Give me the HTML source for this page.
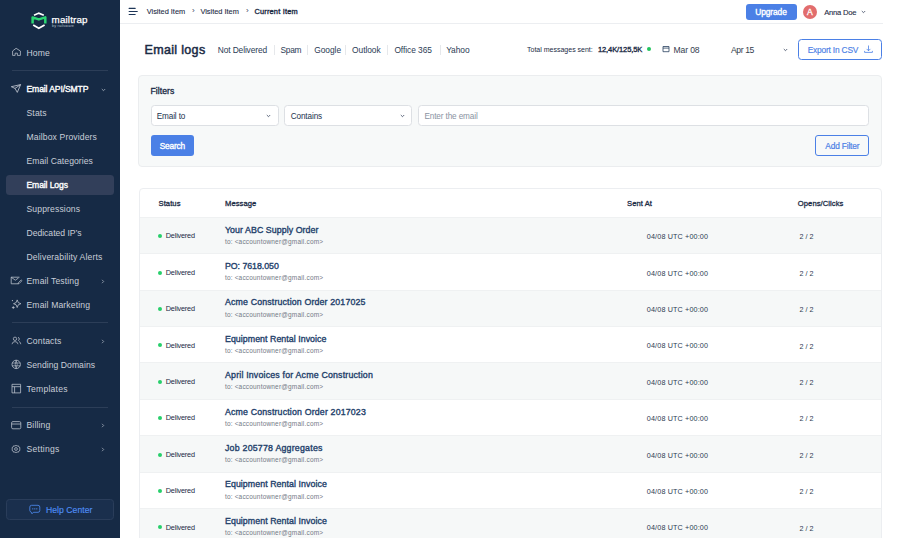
<!DOCTYPE html>
<html><head><meta charset="utf-8">
<style>
*{box-sizing:border-box;margin:0;padding:0}
html,body{width:900px;height:538px;overflow:hidden;background:#fff;font-family:"Liberation Sans",sans-serif;color:#1b2b45}
.sb{position:absolute;left:0;top:0;width:119.5px;height:538px;background:#162a45}
.abs{position:absolute;white-space:nowrap}
.nav{position:absolute;left:26.5px;font-size:8.6px;color:#c9ced8;line-height:10px;letter-spacing:0.13px;margin-top:0.4px;white-space:nowrap}
.nav.b{font-weight:normal;color:#fff;letter-spacing:-0.12px;-webkit-text-stroke:0.35px #fff}
.ico{position:absolute}
.div{position:absolute;left:12px;width:96px;height:1px;background:#2c3e58;margin-top:-0.6px}
.crumb{top:6.9px;font-size:7.4px;line-height:9px;color:#1b2a44;-webkit-text-stroke:0.1px #1b2a44}
.crumb.b{color:#1b2a44;letter-spacing:0.2px;-webkit-text-stroke:0.35px #1b2a44}
.crumbsep{top:6.4px;font-size:8px;line-height:9px;color:#3a4660}
.tab{top:44.5px;font-size:8.4px;letter-spacing:-0.05px;line-height:10px;color:#2b3b55}
.tsep{top:45px;width:1px;height:10px;background:#e6e8eb}
.sel{top:105.2px;height:20.5px;background:#fff;border:1px solid #dde0e4;border-radius:3.5px}
.seltxt{top:112.2px;font-size:8.2px;letter-spacing:-0.12px;line-height:10px;color:#22324d}
.th{position:absolute;top:10.2px;letter-spacing:0.08px;font-size:7.6px;line-height:9px;font-weight:normal;-webkit-text-stroke:0.3px #1b2b45;color:#1b2b45;white-space:nowrap}
.row{position:absolute;left:0;width:100%;height:36.4px;border-top:1px solid #eff1f2}
.row>div{position:absolute;white-space:nowrap}
.dot{left:18.2px;top:16.3px;width:4px;height:4px;border-radius:50%;background:#27cf6b}
.st{left:25.8px;top:13.6px;font-size:7.3px;letter-spacing:-0.2px;line-height:9px;color:#1b2b45}
.subj{left:85px;top:6.8px;font-size:8.8px;line-height:10px;font-weight:normal;-webkit-text-stroke:0.35px #22406a;color:#22406a}
.to{left:84.9px;top:20px;font-size:6.5px;letter-spacing:0.18px;line-height:8px;color:#737a86}
.dt{left:506.8px;top:14.4px;font-size:7.2px;letter-spacing:0.15px;line-height:9px;color:#2d3b52}
.oc{left:659.5px;top:14.5px;font-size:7.2px;line-height:9px;color:#2d3b52}
.main{position:absolute;left:119.5px;top:0;right:0;bottom:0}
</style></head><body>
<div class="sb">
  <!-- logo -->
  <svg class="ico" style="left:28px;top:9px" width="22" height="22" viewBox="28 9 22 22">
    <path d="M34 15.3 L38.8 13.1 L43.8 15.3" fill="none" stroke="#fff" stroke-width="1.7" stroke-linejoin="miter"/>
    <path d="M33.2 25 L38.8 28.2 L44.6 25" fill="none" stroke="#fff" stroke-width="1.8" stroke-linejoin="miter"/>
    <path d="M32.6 23.5 V17.4 L38.8 19.4 L45.3 17.4 V23.5" fill="none" stroke="#2bd672" stroke-width="2.5" stroke-linejoin="round"/>
  </svg>
  <div class="abs" style="left:51.6px;top:13.6px;font-size:9.8px;line-height:11px;color:#fff;letter-spacing:0.15px;-webkit-text-stroke:0.25px #fff">mailtrap</div>
  <div class="abs" style="left:52px;top:24px;font-size:3.7px;line-height:4px;color:#b8c0cc;letter-spacing:0.2px">by railsware</div>

  <svg class="ico" style="left:10px;top:46px" width="12" height="12" viewBox="10 46 12 12"><path d="M12.6 55.4V51L16.1 48.3L20.4 51V55.4H17.4V53.2H15.1V55.4Z" fill="none" stroke="#b8bfca" stroke-width="0.8" stroke-linejoin="round"/></svg>
  <div class="nav" style="top:47.5px">Home</div>
  <div class="div" style="top:71px"></div>

  <svg class="ico" style="left:9px;top:82px" width="14" height="13" viewBox="9 82 14 13"><path d="M11.3 86.7L20.6 84.6L17.3 92.4L15 88.4Z M15 88.4L20.6 84.6" fill="none" stroke="#c9ced8" stroke-width="0.8" stroke-linejoin="round"/></svg>
  <div class="nav b" style="top:83.5px">Email API/SMTP</div>
  <svg class="ico" style="left:101px;top:88px" width="5" height="4" viewBox="0 0 5 4"><path d="M0.8 1L2.5 2.7L4.2 1" fill="none" stroke="#aab2bf" stroke-width="0.8"/></svg>

  <div class="nav" style="top:108px">Stats</div>
  <div class="nav" style="top:132px">Mailbox Providers</div>
  <div class="nav" style="top:156px;letter-spacing:0.06px">Email Categories</div>
  <div class="abs" style="left:6px;top:174.7px;width:107.7px;height:20.4px;border-radius:3.5px;background:#323f5a"></div>
  <div class="nav b" style="top:180px">Email Logs</div>
  <div class="nav" style="top:204px">Suppressions</div>
  <div class="nav" style="top:228px;letter-spacing:-0.02px">Dedicated IP’s</div>
  <div class="nav" style="top:252px;letter-spacing:0.16px">Deliverability Alerts</div>
  <div class="nav" style="top:276px">Email Testing</div>
  <div class="nav" style="top:300px">Email Marketing</div>
  <div class="div" style="top:322.9px"></div>
  <div class="nav" style="top:336px">Contacts</div>
  <div class="nav" style="top:360px;letter-spacing:0.05px">Sending Domains</div>
  <div class="nav" style="top:384px;letter-spacing:0.23px">Templates</div>
  <div class="div" style="top:407.1px"></div>
  <div class="nav" style="top:420px">Billing</div>
  <div class="nav" style="top:444px;letter-spacing:0.25px">Settings</div>

  <!-- email testing -->
  <svg class="ico" style="left:10px;top:275px" width="13" height="11" viewBox="10 275 13 11"><path d="M19.5 277.2H11.2V283.8H18 M11.2 277.2L15.3 280.2L18.5 278" fill="none" stroke="#c3c9d3" stroke-width="0.75"/><path d="M18.3 282.8L21.2 279.9L22 280.7L19.1 283.6L18 283.9Z" fill="none" stroke="#c3c9d3" stroke-width="0.7"/></svg>
  <svg class="ico" style="left:100.8px;top:279px" width="4" height="5" viewBox="0 0 4 5"><path d="M1 0.8L2.7 2.5L1 4.2" fill="none" stroke="#aab2bf" stroke-width="0.75"/></svg>
  <!-- email marketing -->
  <svg class="ico" style="left:10px;top:298px" width="13" height="12" viewBox="10 298 13 12"><path d="M17.2 299.9Q17.5 303.4 20.9 303.7Q17.5 304 17.2 307.5Q16.9 304 13.5 303.7Q16.9 303.4 17.2 299.9Z" fill="none" stroke="#c3c9d3" stroke-width="0.75" stroke-linejoin="round"/><path d="M13.3 306.2V308.9M11.9 307.55H14.7" stroke="#c3c9d3" stroke-width="0.75"/><circle cx="12.4" cy="300.6" r="0.6" fill="#c3c9d3"/></svg>
  <!-- contacts -->
  <svg class="ico" style="left:10px;top:336px" width="13" height="10" viewBox="10 336 13 10"><circle cx="15" cy="338.8" r="1.7" fill="none" stroke="#c3c9d3" stroke-width="0.7"/><path d="M12 344.2Q12.3 341.6 15 341.6Q17.7 341.6 18 344.2 M18 337.3Q19.5 337.7 19.3 339.2Q19.1 340.4 18 340.6 M19 341.5Q20.6 342 20.8 344.2" fill="none" stroke="#c3c9d3" stroke-width="0.7"/></svg>
  <svg class="ico" style="left:100.8px;top:339px" width="4" height="5" viewBox="0 0 4 5"><path d="M1 0.8L2.7 2.5L1 4.2" fill="none" stroke="#aab2bf" stroke-width="0.75"/></svg>
  <!-- sending domains -->
  <svg class="ico" style="left:10px;top:359px" width="13" height="11" viewBox="10 359 13 11"><circle cx="16.2" cy="364.4" r="4.2" fill="none" stroke="#c3c9d3" stroke-width="0.75"/><path d="M12.2 363H20.2M12.2 365.8H20.2 M16.2 360.2Q14.2 364.4 16.2 368.6 M16.2 360.2Q18.2 364.4 16.2 368.6" fill="none" stroke="#c3c9d3" stroke-width="0.6"/></svg>
  <!-- templates -->
  <svg class="ico" style="left:10px;top:383px" width="13" height="11" viewBox="10 383 13 11"><path d="M12 384.3H20.6V392.9H12Z M12 386.7H20.6 M14.6 386.7V392.9" fill="none" stroke="#c3c9d3" stroke-width="0.75"/></svg>
  <!-- billing -->
  <svg class="ico" style="left:10px;top:420px" width="13" height="11" viewBox="10 420 13 11"><rect x="11.6" y="421.6" width="9.2" height="7.2" rx="1.3" fill="none" stroke="#c3c9d3" stroke-width="0.75"/><path d="M11.6 424H20.8" stroke="#c3c9d3" stroke-width="0.75"/></svg>
  <svg class="ico" style="left:100.8px;top:423px" width="4" height="5" viewBox="0 0 4 5"><path d="M1 0.8L2.7 2.5L1 4.2" fill="none" stroke="#aab2bf" stroke-width="0.75"/></svg>
  <!-- settings -->
  <svg class="ico" style="left:10px;top:444px" width="13" height="11" viewBox="10 444 13 11"><circle cx="16" cy="449" r="1.4" fill="none" stroke="#c3c9d3" stroke-width="0.7"/><path d="M16 445.3L17.1 446L18.4 445.8L18.9 447L20 447.7L19.7 449L20 450.3L18.9 451L18.4 452.2L17.1 452L16 452.7L14.9 452L13.6 452.2L13.1 451L12 450.3L12.3 449L12 447.7L13.1 447L13.6 445.8L14.9 446Z" fill="none" stroke="#c3c9d3" stroke-width="0.7" stroke-linejoin="round"/></svg>
  <svg class="ico" style="left:100.8px;top:447px" width="4" height="5" viewBox="0 0 4 5"><path d="M1 0.8L2.7 2.5L1 4.2" fill="none" stroke="#aab2bf" stroke-width="0.75"/></svg>

  <div class="abs" style="left:6px;top:499.2px;width:107.7px;height:21.2px;border-radius:3.5px;border:1px solid #2a3d5a;background:#1a2f4d"></div>
  <div class="abs" style="left:46px;top:505.2px;font-size:8.6px;color:#4f8ef5;line-height:10px;letter-spacing:0.05px;-webkit-text-stroke:0.15px #4f8ef5">Help Center</div>
  <!-- help chat -->
  <svg class="ico" style="left:28px;top:503px" width="14" height="13" viewBox="28 503 14 13"><path d="M31.6 505.3H38Q39.8 505.3 39.8 507.1V510.5Q39.8 512.3 38 512.3H33.3L32 513.8L31.2 512.1Q29.8 511.6 29.8 510.5V507.1Q29.8 505.3 31.6 505.3Z" fill="none" stroke="#4f8ef5" stroke-width="0.8" stroke-linejoin="round"/><path d="M32.8 508.4V509.2M34.8 508.4V509.2M36.8 508.4V509.2" stroke="#4f8ef5" stroke-width="0.7" stroke-linecap="round"/></svg>
</div>

<div class="main">
  <!-- header -->
  <div class="abs" style="left:0;top:0;width:763.5px;height:23.8px;border-bottom:1px solid #eceef1"></div>
  <svg class="ico" style="left:7.5px;top:6px" width="12" height="11" viewBox="127 6 12 11"><path d="M129.1 8.4H135.2M129.1 11.4H137.3M129.1 14.5H135.2" stroke="#1e3658" stroke-width="1.05" stroke-linecap="round"/></svg>
  <div class="abs crumb" style="left:27.2px">Visited Item</div>
  <div class="abs crumbsep" style="left:72.5px">›</div>
  <div class="abs crumb" style="left:80.9px">Visited Item</div>
  <div class="abs crumbsep" style="left:126.5px">›</div>
  <div class="abs crumb b" style="left:134.9px">Current Item</div>

  <div class="abs" style="left:626.3px;top:3.7px;width:51.2px;height:16px;border-radius:3px;background:#4b80e6"></div>
  <div class="abs" style="left:635.8px;top:7.1px;font-size:8.4px;letter-spacing:-0.1px;line-height:10px;color:#fff;-webkit-text-stroke:0.35px #fff">Upgrade</div>
  <div class="abs" style="left:683.3px;top:5px;width:14.2px;height:14.2px;border-radius:50%;background:#e26d6d"></div>
  <div class="abs" style="left:687.4px;top:6.8px;font-size:8.6px;line-height:10px;color:#fff;-webkit-text-stroke:0.3px #fff">A</div>
  <div class="abs" style="left:704.7px;top:7.8px;font-size:7.6px;letter-spacing:-0.2px;line-height:10px;color:#1b2a44;-webkit-text-stroke:0.1px #1b2a44">Anna Doe</div>
  <svg class="ico" style="left:741.5px;top:10px" width="5" height="4" viewBox="0 0 5 4"><path d="M0.8 1L2.5 2.7L4.2 1" fill="none" stroke="#3a4660" stroke-width="0.8"/></svg>

  <!-- title row -->
  <div class="abs" style="left:25px;top:42.9px;font-size:12.5px;line-height:14px;letter-spacing:0.33px;color:#1b2b45;-webkit-text-stroke:0.5px #1b2b45">Email logs</div>
  <div class="abs tab" style="left:98.3px;letter-spacing:-0.12px">Not Delivered</div>
  <div class="abs tsep" style="left:154px"></div>
  <div class="abs tab" style="left:161px;letter-spacing:-0.3px">Spam</div>
  <div class="abs tsep" style="left:187.8px"></div>
  <div class="abs tab" style="left:194.8px">Google</div>
  <div class="abs tsep" style="left:225.9px"></div>
  <div class="abs tab" style="left:232.6px">Outlook</div>
  <div class="abs tsep" style="left:267.9px"></div>
  <div class="abs tab" style="left:274.9px">Office 365</div>
  <div class="abs tsep" style="left:320.1px"></div>
  <div class="abs tab" style="left:326.7px">Yahoo</div>

  <div class="abs" style="left:407.5px;top:45px;font-size:7px;line-height:9px;color:#1b2b45">Total messages sent: <span style="font-size:7.5px;letter-spacing:-0.09px;margin-left:3.2px;-webkit-text-stroke:0.35px #1b2b45">12,4K/125,5K</span></div>
  <div class="abs" style="left:527.1px;top:47.4px;width:4px;height:4px;border-radius:50%;background:#22c55e"></div>
  <svg class="ico" style="left:541px;top:44px" width="9" height="10" viewBox="660.5 44 9 10"><path d="M662.5 46.5H668.5V51.7H662.5Z M662.5 48.1H668.5" fill="none" stroke="#2a4160" stroke-width="0.8"/></svg>
  <div class="abs" style="left:554.1px;top:44.5px;font-size:8.6px;line-height:10px;color:#333d4d;letter-spacing:-0.15px">Mar 08</div>
  <div class="abs" style="left:611.5px;top:44.5px;font-size:8.6px;letter-spacing:-0.4px;line-height:10px;color:#333d4d">Apr 15</div>
  <svg class="ico" style="left:663.5px;top:48px" width="5" height="4" viewBox="0 0 5 4"><path d="M0.8 1L2.5 2.7L4.2 1" fill="none" stroke="#3a4660" stroke-width="0.8"/></svg>
  <div class="abs" style="left:678.8px;top:38.8px;width:83.5px;height:21px;border:1px solid #4b80e6;border-radius:3.5px"></div>
  <div class="abs" style="left:688.2px;top:44.5px;font-size:8.4px;letter-spacing:-0.2px;line-height:10px;color:#4b80e6;-webkit-text-stroke:0.15px #4b80e6">Export In CSV</div>
  <svg class="ico" style="left:744.5px;top:45px" width="9" height="8" viewBox="0 0 9 8"><path d="M4.5 0.5V5.8 M2.6 3.9L4.5 5.8L6.4 3.9 M0.6 5.9V7.4H8.4V5.9" fill="none" stroke="#4b80e6" stroke-width="0.8"/></svg>

  <!-- filters -->
  <div class="abs" style="left:18.6px;top:75.2px;width:744px;height:92px;background:#f7f9f9;border:1px solid #ebedef;border-radius:4px"></div>
  <div class="abs" style="left:31px;top:86px;font-size:8.6px;letter-spacing:0.06px;line-height:10px;color:#1b2b45;-webkit-text-stroke:0.35px #1b2b45">Filters</div>
  <div class="abs sel" style="left:31px;width:128.2px"></div>
  <div class="abs seltxt" style="left:37.2px">Email to</div>
  <svg class="ico" style="left:146.5px;top:113.5px" width="5" height="4" viewBox="0 0 5 4"><path d="M0.8 1L2.5 2.7L4.2 1" fill="none" stroke="#3a4660" stroke-width="0.8"/></svg>
  <div class="abs sel" style="left:164.8px;width:128.2px"></div>
  <div class="abs seltxt" style="left:171.2px">Contains</div>
  <svg class="ico" style="left:280.5px;top:113.5px" width="5" height="4" viewBox="0 0 5 4"><path d="M0.8 1L2.5 2.7L4.2 1" fill="none" stroke="#3a4660" stroke-width="0.8"/></svg>
  <div class="abs sel" style="left:298.9px;width:450.5px"></div>
  <div class="abs seltxt" style="left:304.9px;color:#8a93a2">Enter the email</div>
  <div class="abs" style="left:31px;top:135px;width:43.7px;height:21px;border-radius:3px;background:#4b80e6"></div>
  <div class="abs" style="left:40.2px;top:140.8px;font-size:8.3px;line-height:10px;letter-spacing:-0.18px;color:#fff;-webkit-text-stroke:0.35px #fff">Search</div>
  <div class="abs" style="left:695.7px;top:135px;width:53.5px;height:21px;border:1px solid #4b80e6;border-radius:3px"></div>
  <div class="abs" style="left:705.8px;top:140.6px;font-size:8.3px;letter-spacing:-0.15px;line-height:10px;color:#4b80e6;-webkit-text-stroke:0.2px #4b80e6">Add Filter</div>

  <!-- table -->
  <div class="abs" style="left:19.5px;top:188.2px;width:742.8px;height:400px;background:#fff;border:1px solid #eceef1;border-radius:4px;overflow:hidden">
    <div class="th" style="left:18.5px">Status</div>
    <div class="th" style="left:85px">Message</div>
    <div class="th" style="left:487px">Sent At</div>
    <div class="th" style="left:657.8px">Opens/Clicks</div>
    <div class="row" style="top:27.7px;background:#f6f8f8"><div class="dot"></div><div class="st">Delivered</div><div class="subj" style="letter-spacing:0.065px">Your ABC Supply Order</div><div class="to">to: &lt;accountowner@gmail.com&gt;</div><div class="dt">04/08 UTC +00:00</div><div class="oc">2 / 2</div></div>
    <div class="row" style="top:64.1px;background:#fff"><div class="dot"></div><div class="st">Delivered</div><div class="subj" style="letter-spacing:-0.045px">PO: 7618.050</div><div class="to">to: &lt;accountowner@gmail.com&gt;</div><div class="dt">04/08 UTC +00:00</div><div class="oc">2 / 2</div></div>
    <div class="row" style="top:100.5px;background:#f6f8f8"><div class="dot"></div><div class="st">Delivered</div><div class="subj" style="letter-spacing:0.149px">Acme Construction Order 2017025</div><div class="to">to: &lt;accountowner@gmail.com&gt;</div><div class="dt">04/08 UTC +00:00</div><div class="oc">2 / 2</div></div>
    <div class="row" style="top:136.9px;background:#fff"><div class="dot"></div><div class="st">Delivered</div><div class="subj" style="letter-spacing:0.05px">Equipment Rental Invoice</div><div class="to">to: &lt;accountowner@gmail.com&gt;</div><div class="dt">04/08 UTC +00:00</div><div class="oc">2 / 2</div></div>
    <div class="row" style="top:173.3px;background:#f6f8f8"><div class="dot"></div><div class="st">Delivered</div><div class="subj" style="letter-spacing:0.186px">April Invoices for Acme Construction</div><div class="to">to: &lt;accountowner@gmail.com&gt;</div><div class="dt">04/08 UTC +00:00</div><div class="oc">2 / 2</div></div>
    <div class="row" style="top:209.7px;background:#fff"><div class="dot"></div><div class="st">Delivered</div><div class="subj" style="letter-spacing:0.162px">Acme Construction Order 2017023</div><div class="to">to: &lt;accountowner@gmail.com&gt;</div><div class="dt">04/08 UTC +00:00</div><div class="oc">2 / 2</div></div>
    <div class="row" style="top:246.1px;background:#f6f8f8"><div class="dot"></div><div class="st">Delivered</div><div class="subj" style="letter-spacing:0.223px">Job 205778 Aggregates</div><div class="to">to: &lt;accountowner@gmail.com&gt;</div><div class="dt">04/08 UTC +00:00</div><div class="oc">2 / 2</div></div>
    <div class="row" style="top:282.5px;background:#fff"><div class="dot"></div><div class="st">Delivered</div><div class="subj" style="letter-spacing:0.067px">Equipment Rental Invoice</div><div class="to">to: &lt;accountowner@gmail.com&gt;</div><div class="dt">04/08 UTC +00:00</div><div class="oc">2 / 2</div></div>
    <div class="row" style="top:318.9px;background:#f6f8f8"><div class="dot"></div><div class="st">Delivered</div><div class="subj" style="letter-spacing:0.067px">Equipment Rental Invoice</div><div class="to">to: &lt;accountowner@gmail.com&gt;</div><div class="dt">04/08 UTC +00:00</div><div class="oc">2 / 2</div></div>
  </div>
</div>
</body></html>
